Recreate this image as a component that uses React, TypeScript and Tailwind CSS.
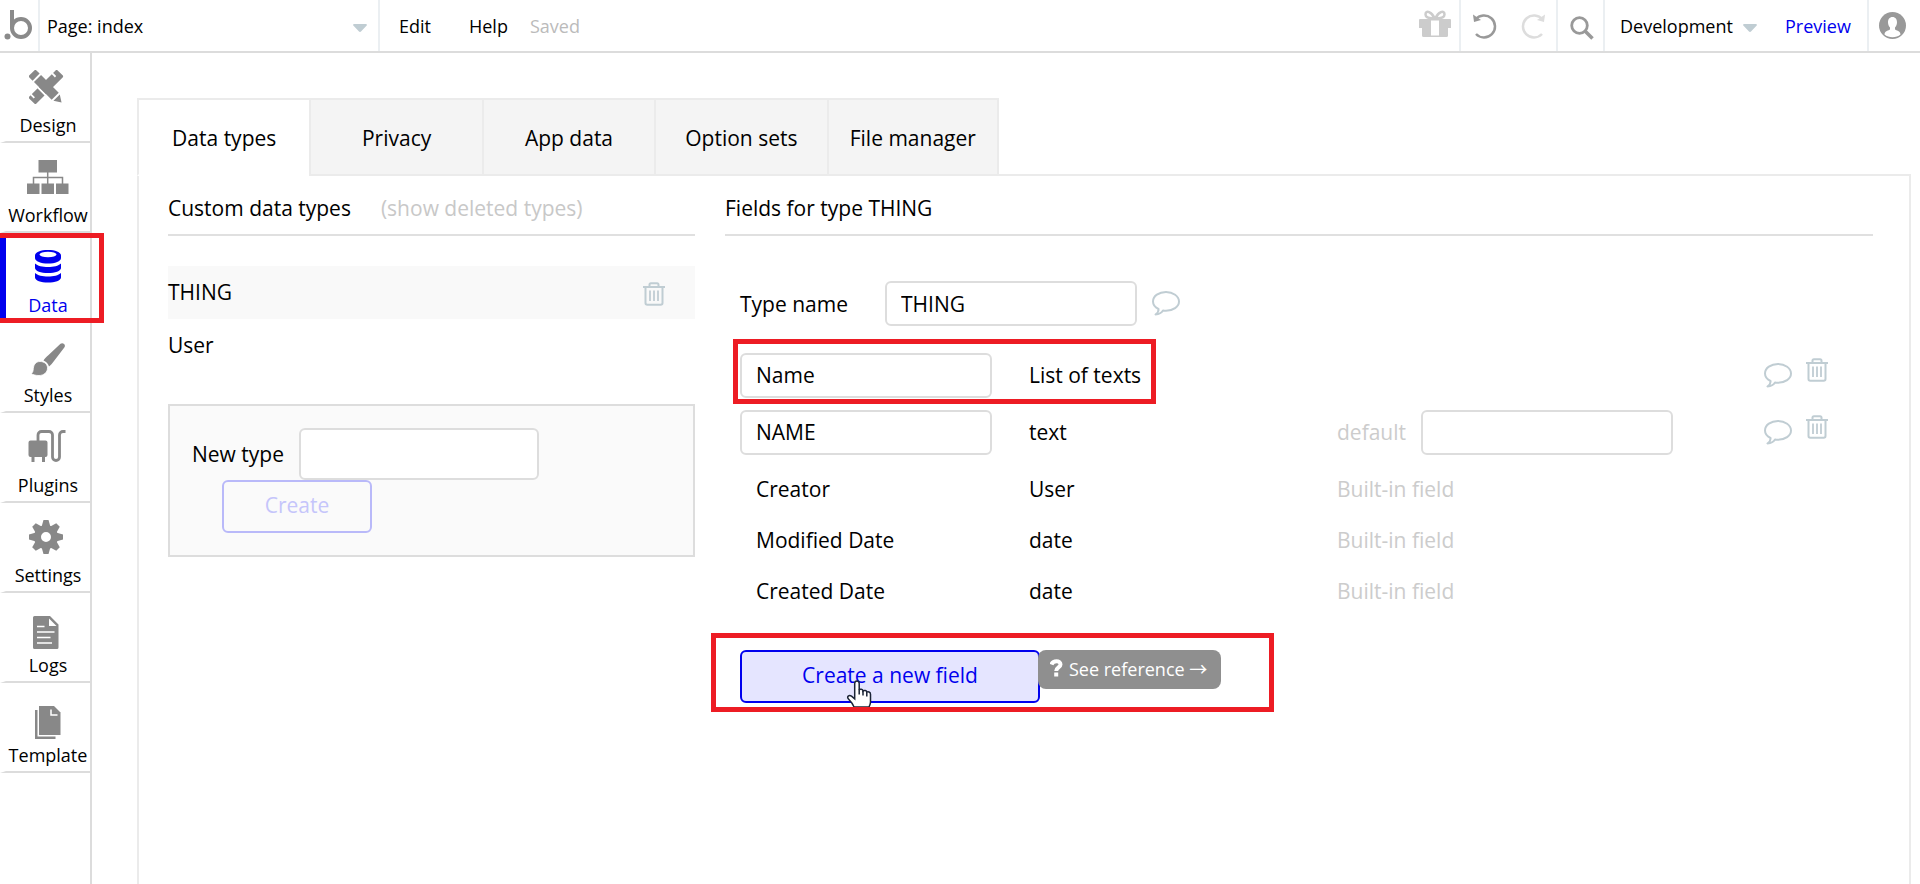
import { useState } from "react";
import type { ReactNode } from "react";
import { clsx } from "clsx";

function LogoIcon() {
  return (
    <svg width="30" height="30" viewBox="0 0 30 30" fill="none" stroke="#8a8a8a" strokeWidth="4">
      <circle cx="3.5" cy="26.5" r="3" fill="#8a8a8a" stroke="none" />
      <path d="M8 0v18.5" />
      <circle cx="17" cy="18" r="9" />
    </svg>
  );
}

function DesignIcon() {
  return (
    <svg width="38" height="34" viewBox="0 0 38 34" fill="currentColor">
      <g transform="rotate(-45 17 17)">
        <rect x="-3" y="12" width="40" height="10" rx="1.5" />
        <path d="M1 11.500v5M31 11.500v5" stroke="#fff" strokeWidth="1.800" />
      </g>
      <g transform="rotate(45 17 17)">
        <path d="M-5 10h13v14H-5zM8 22h16v2H8zM28 10h12v14H28z" fill="#fff" />
        <path d="M-1.500 12H3v10h-4.500a1.500 1.500 0 0 1-1.500-1.500v-7a1.500 1.500 0 0 1 1.500-1.500zM5 12h25v10H5zM32 12.500l7 4.500-7 4.500z" />
      </g>
    </svg>
  );
}

function WorkflowIcon() {
  return (
    <svg width="42" height="34" viewBox="0 0 42 34" fill="currentColor">
      <path d="M11.500 0h18.500v12.500H11.500zM0 23.500h12.500V34H0zM14.500 23.500H27V34H14.500zM29 23.500h12.500V34H29z" />
      <path d="M20.700 12v12M6.500 24v-6.500h29V24" fill="none" stroke="currentColor" strokeWidth="1.500" />
    </svg>
  );
}

function DataIcon() {
  return (
    <svg width="26" height="33" viewBox="0 0 26 33" fill="currentColor">
      <path d="M0 5.500C0 2 6 0 13 0s13 2 13 5.500V8c0 3.500-6 5.500-13 5.500S0 11.500 0 8z" />
      <ellipse cx="13" cy="4.500" rx="8.500" ry="2.800" fill="#fff" />
      <path d="M0 13.500c2.500 2.500 7.500 3.500 13 3.500s10.500-1 13-3.500V18c0 3-6 5-13 5S0 21 0 18z" />
      <path d="M0 23c2.500 2.500 7.500 3.500 13 3.500S23.500 25.500 26 23v4.500c0 3-6 5-13 5s-13-2-13-5z" />
    </svg>
  );
}

function StylesIcon() {
  return (
    <svg width="35" height="36" viewBox="0 -3 35 36" fill="currentColor">
      <path d="M29.500.8c2.200-1.700 5.600.8 4 3.400L23 18c-1.500 2-3 4-5 5.500-.8-2.800-3-5-5.500-6 1.200-2.200 3-3.500 4.500-5z" />
      <path
        d="M9 18.500c4.300 0 7.300 2.500 7.500 6.200.2 4.500-3.500 7.800-8.500 7.800-3 0-5.500-.5-8-2 2-.8 2-2.500 2.300-5 .4-4.300 3-7 6.700-7z"
        stroke="#fff"
        strokeWidth=".8"
      />
    </svg>
  );
}

function PluginsIcon() {
  return (
    <svg width="41" height="33" viewBox="0 0 41 33" fill="currentColor">
      <path d="M2.500 10.500h15a2 2 0 0 1 2 2V25a2 2 0 0 1-2 2H17v5h-3v-5H6.500v5h-3v-5h-1a2 2 0 0 1-2-2V12.500a2 2 0 0 1 2-2z" />
      <path
        d="M10 11V5a3.500 3.500 0 0 1 3.500-3.500H21A3.500 3.500 0 0 1 24.500 5v22a3.500 3.500 0 0 0 7 0V5A3.500 3.500 0 0 1 35 1.500h2.500"
        fill="none"
        stroke="currentColor"
        strokeWidth="2.800"
      />
    </svg>
  );
}

function SettingsIcon() {
  const teeth = [0, 45, 90, 135, 180, 225, 270, 315];
  return (
    <svg width="38" height="34" viewBox="0 0 38 34" fill="currentColor">
      <circle cx="17" cy="17" r="8.500" fill="none" stroke="currentColor" strokeWidth="7" />
      {teeth.map((a) => (
        <path key={a} d="M14.500 0h5l2 7h-9z" transform={`rotate(${a} 17 17)`} />
      ))}
    </svg>
  );
}

function LogsIcon() {
  return (
    <svg width="30" height="39" viewBox="0 -6 30 39" fill="currentColor">
      <path d="M1.500 0H17l8.500 8.500v23a1.500 1.500 0 0 1-1.500 1.500H1.500A1.500 1.500 0 0 1 0 31.500v-30A1.500 1.500 0 0 1 1.500 0z" />
      <path d="M16 2.500v7.500h7.500z" fill="#fff" />
      <path d="M4 10.500h7.500M4 16h17.500M4 21.500h13.500M4 27h15" stroke="#fff" strokeWidth="1.500" />
    </svg>
  );
}

function TemplateIcon() {
  return (
    <svg width="26" height="39" viewBox="0 -6 26 39" fill="currentColor">
      <path d="M4 0h15l6.500 6.500V29H4z" />
      <path d="M16 3.500V9h6.500" fill="none" stroke="#fff" strokeWidth="1.500" />
      <path d="M0 4h2.500v26.500h18V33H0z" />
    </svg>
  );
}

function GiftIcon() {
  return (
    <svg width="32" height="28" viewBox="0 0 32 28" fill="#ccc">
      <path d="M1 9h11v18H4.500A1.500 1.500 0 0 1 3 25.500V18H0v-8a1 1 0 0 1 1-1zM20 9h11a1 1 0 0 1 1 1v8h-3v7.500a1.500 1.500 0 0 1-1.500 1.500H20zM12 9h8v1.500h-8zM12 25.500h8V27h-8z" />
      <path
        d="M15.500 8.500C13 2 6.500-.5 6.500 4.500c0 3 4 4 9 4zM16.500 8.500C19 2 25.500-.5 25.500 4.500c0 3-4 4-9 4z"
        fill="none"
        stroke="#ccc"
        strokeWidth="2.500"
      />
    </svg>
  );
}

function UndoIcon({ className }: { className?: string }) {
  return (
    <svg className={className} width="24" height="26" viewBox="0 0 24 26" fill="none" stroke="currentColor">
      <path d="M2.500 6.500A11 11 0 1 1 3 21" strokeWidth="2.500" />
      <path d="M0 1.500l1 7.500 7-2z" fill="currentColor" stroke="none" />
    </svg>
  );
}

function SearchIcon() {
  return (
    <svg width="24" height="24" viewBox="0 0 24 24" fill="none" stroke="#999" strokeWidth="2.800">
      <circle cx="9.500" cy="9.500" r="7.800" />
      <path d="M15 15l7.500 7.500" strokeWidth="3.500" />
    </svg>
  );
}

function AvatarIcon() {
  return (
    <svg width="27" height="27" viewBox="0 0 27 27">
      <circle cx="13.500" cy="13.500" r="13.500" fill="#999" />
      <path
        d="M13.500 5c3 0 4.500 2.300 4.500 5.200 0 2.300-.8 4-2 5.200v2c1 1 5.500 1.300 5.500 5.100-2 1.800-5 2.800-8 2.800s-6-1-8-2.800c0-3.800 4.500-4.100 5.500-5.100v-2c-1.200-1.200-2-2.900-2-5.200C9 7.300 10.500 5 13.500 5z"
        fill="#fff"
      />
    </svg>
  );
}

function Caret({ className }: { className?: string }) {
  return (
    <svg className={className} width="14" height="8" viewBox="0 0 14 8" fill="#c0cdd3">
      <path d="M1 0h12a1 1 0 0 1 .7 1.600L8 7.500a1.400 1.400 0 0 1-2 0L.3 1.600A1 1 0 0 1 1 0z" />
    </svg>
  );
}

function TrashIcon() {
  return (
    <svg width="22" height="24" viewBox="0 0 22 24" fill="none" stroke="#c0cdd3" strokeWidth="2">
      <path d="M0 5h22M6.500 5V3A1.500 1.500 0 0 1 8 1.200h6A1.500 1.500 0 0 1 15.500 3v2" />
      <path d="M2.500 5v16a1.800 1.800 0 0 0 1.800 1.800h13.400a1.800 1.800 0 0 0 1.800-1.800V5" />
      <path d="M7 8.500V19M11 8.500V19M15 8.500V19" strokeWidth="1.800" />
    </svg>
  );
}

function CommentIcon() {
  return (
    <svg width="28" height="25" viewBox="0 0 28 25" fill="none" stroke="#c0cdd3" strokeWidth="2">
      <path
        d="M14 1C7 1 1 5 1 10.500c0 3 2 5.800 5.500 7.500.3 1.800-1 4-3 5.500 3.500-.3 6-1.500 7.500-4 1 .3 2 .3 3 .3 7 0 13-4 13-9.300S21 1 14 1z"
        strokeLinejoin="round"
      />
    </svg>
  );
}

function HelpIcon() {
  return (
    <svg width="13" height="18" viewBox="0 0 13 18" fill="none" stroke="#fff" strokeWidth="4">
      <path d="M1.500 5.500C3 1 10.500 1 10.500 5.500c0 3-4.300 3-4.300 6.500" />
      <path d="M6.200 13.500v4" />
    </svg>
  );
}

function HandCursor() {
  return (
    <svg className="pointer-events-none absolute top-[30px] left-[106px]" width="26" height="27" viewBox="0 0 26 27">
      <path
        d="M11 1c1.500 0 2.200 1 2.200 2.500V10c.5-1.300 3.700-1 3.800 1 1-1 3.800-.6 3.800 1.200 1-.8 3.700-.4 3.700 2V22c0 2-.7 3.500-1.500 5H8c-1-3-3-5.500-5.500-8-2.200-2.200.5-4.500 3-2.800l3.200 2.600V3.500C8.700 2 9.500 1 11 1z"
        fill="#fff"
        stroke="#1b2436"
        strokeWidth="1.500"
      />
      <path d="M13.200 9.500v5M17 11v4.500M20.800 12.500v4" stroke="#1b2436" strokeWidth="1.500" />
    </svg>
  );
}

const navItems: { name: string; icon: ReactNode }[] = [
  { name: "Design", icon: <DesignIcon /> },
  { name: "Workflow", icon: <WorkflowIcon /> },
  { name: "Data", icon: <DataIcon /> },
  { name: "Styles", icon: <StylesIcon /> },
  { name: "Plugins", icon: <PluginsIcon /> },
  { name: "Settings", icon: <SettingsIcon /> },
  { name: "Logs", icon: <LogsIcon /> },
  { name: "Template", icon: <TemplateIcon /> },
];

const tabs = ["Data types", "Privacy", "App data", "Option sets", "File manager"];

const builtInFields = [
  { name: "Creator", type: "User" },
  { name: "Modified Date", type: "date" },
  { name: "Created Date", type: "date" },
];

const inputClasses = "rounded-md border-2 border-[#ddd] bg-white outline-none";

function TopBar() {
  return (
    <header className="flex h-[53px] items-stretch border-b-2 border-[#dcdcdc] text-[18px]">
      <a href="#" aria-label="Home" className="flex w-10 items-center border-r-2 border-[#ebeff2] pr-1 pb-0.5 pl-1">
        <LogoIcon />
      </a>
      <div className="relative w-[340px] border-r-2 border-[#ebeff2]">
        <select aria-label="Page" className="h-full w-full appearance-none pt-0.5 pl-[7px] outline-none">
          <option>Page: index</option>
        </select>
        <Caret className="pointer-events-none absolute top-6 right-[11px]" />
      </div>
      <button className="ml-[19px] pt-0.5">Edit</button>
      <button className="ml-[38px] pt-0.5">Help</button>
      <span className="ml-[22px] self-center pt-0.5 text-[#bbb]">Saved</span>

      <div className="ml-auto flex items-stretch">
        <button aria-label="Gifts" className="flex w-[42px] items-center border-r-2 border-[#ebeff2] pb-1">
          <GiftIcon />
        </button>
        <div className="flex w-[97px] items-center gap-6 border-r-2 border-[#ebeff2] pl-3">
          <button aria-label="Undo" className="text-[#999]">
            <UndoIcon />
          </button>
          <button aria-label="Redo" className="text-[#ddd]">
            <UndoIcon className="-scale-x-100" />
          </button>
        </div>
        <button aria-label="Search" className="flex w-[47px] items-center border-r-2 border-[#ebeff2] pt-1 pl-3">
          <SearchIcon />
        </button>
        <div className="relative w-[160px]">
          <select aria-label="Version" className="h-full w-full appearance-none pt-0.5 pl-[15px] outline-none">
            <option>Development</option>
          </select>
          <Caret className="pointer-events-none absolute top-6 right-2" />
        </div>
        <a href="#" className="flex w-[104px] items-center border-r-2 border-[#ebeff2] pt-0.5 pl-5 text-[#0000ee]">
          Preview
        </a>
        <button aria-label="Account" className="flex w-[51px] items-center pl-2.5">
          <AvatarIcon />
        </button>
      </div>
    </header>
  );
}

function Sidebar() {
  return (
    <nav className="w-[92px] shrink-0 border-r-2 border-[#dcdcdc] text-[18px]">
      <ul>
        {navItems.map((item) => {
          const active = item.name === "Data";
          return (
            <li key={item.name} className="relative">
              <a
                href="#"
                className={clsx(
                  "flex h-[90px] flex-col items-center border-b-2 border-l-[6px] border-b-[#dcdcdc] pt-[17px]",
                  active ? "border-l-[#0000ee] text-[#0000ee]" : "border-l-transparent",
                )}
              >
                <span className={clsx("flex h-[34px] items-start", !active && "text-[#888]")}>{item.icon}</span>
                <span className="mt-[7px] leading-7">{item.name}</span>
              </a>
              {active && (
                <div className="pointer-events-none absolute inset-y-0 -right-3.5 left-0 z-10 border-5 border-l-0 border-[#ed1c24]" />
              )}
            </li>
          );
        })}
      </ul>
    </nav>
  );
}

function DataTypes() {
  return (
    <section className="w-[527px] shrink-0">
      <div className="flex h-[60px] items-center gap-[30px] border-b-2 border-[#e0e0e0] pt-2">
        <h2>Custom data types</h2>
        <a href="#" className="text-[#c8c8c8]">
          (show deleted types)
        </a>
      </div>
      <ul className="mt-[30px]">
        <li className="flex h-[53px] items-center justify-between bg-[#f9f9f9] pr-[30px]">
          THING
          <button aria-label="Delete THING" className="pt-0.5">
            <TrashIcon />
          </button>
        </li>
        <li className="flex h-[53px] items-center">User</li>
      </ul>
      <form className="mt-8 border-2 border-[#ddd] bg-[#fafafa] pt-[22px] pb-[22px] pl-[22px]">
        <div className="flex items-center">
          <label htmlFor="new-type" className="w-[107px] pt-0.5">
            New type
          </label>
          <input id="new-type" className={clsx(inputClasses, "h-[52px] w-[240px] px-3")} />
        </div>
        <button
          type="button"
          className="ml-[30px] block h-[53px] w-[150px] rounded-md border-2 border-[#b9b9f9] pb-0.5 text-[#c5c5fa]"
        >
          Create
        </button>
      </form>
    </section>
  );
}

function RowActions({ name }: { name: string }) {
  return (
    <td className="align-top">
      <div className="flex gap-3.5">
        <button aria-label={`Comment on ${name}`} className="pt-2.5">
          <CommentIcon />
        </button>
        <button aria-label={`Delete ${name}`} className="self-start pt-[5px]">
          <TrashIcon />
        </button>
      </div>
    </td>
  );
}

function Fields() {
  const [typeName, setTypeName] = useState("THING");

  return (
    <section className="min-w-0 flex-1">
      <div className="flex h-[60px] items-center border-b-2 border-[#e0e0e0] pt-2">
        <h2>Fields for type THING</h2>
      </div>
      <div className="pt-[45px] pl-[15px]">
        <div className="flex items-center">
          <label htmlFor="type-name" className="w-[145px] pt-0.5">
            Type name
          </label>
          <input
            id="type-name"
            value={typeName}
            onChange={(e) => setTypeName(e.target.value)}
            className={clsx(inputClasses, "h-[45px] w-[252px] px-3.5")}
          />
          <button aria-label="Comment on THING" className="ml-[15px]">
            <CommentIcon />
          </button>
        </div>

        <div className="relative mt-[27px]">
          <table className="w-full table-fixed leading-[45px]">
            <colgroup>
              <col className="w-[289px]" />
              <col className="w-[308px]" />
              <col />
              <col className="w-[109px]" />
            </colgroup>
            <tbody>
              <tr className="h-[57px]">
                <td className="align-top">
                  <input
                    aria-label="Field name"
                    defaultValue="Name"
                    className={clsx(inputClasses, "block h-[45px] w-[252px] px-3.5")}
                  />
                </td>
                <td className="align-top">List of texts</td>
                <td />
                <RowActions name="Name" />
              </tr>
              <tr className="h-[57px]">
                <td className="align-top">
                  <input
                    aria-label="Field name"
                    defaultValue="NAME"
                    className={clsx(inputClasses, "block h-[45px] w-[252px] px-3.5")}
                  />
                </td>
                <td className="align-top">text</td>
                <td className="align-top">
                  <div className="flex">
                    <label htmlFor="default-value" className="w-[84px] text-[#ccc]">
                      default
                    </label>
                    <input id="default-value" className={clsx(inputClasses, "h-[45px] w-[252px] px-3.5")} />
                  </div>
                </td>
                <RowActions name="NAME" />
              </tr>
              {builtInFields.map((field) => (
                <tr key={field.name} className="h-[51px]">
                  <td className="pl-4 align-top">{field.name}</td>
                  <td className="align-top">{field.type}</td>
                  <td className="align-top text-[#ccc]">Built-in field</td>
                  <td />
                </tr>
              ))}
            </tbody>
          </table>
          <div className="pointer-events-none absolute -top-3.5 -left-[7px] h-[65px] w-[423px] border-5 border-[#ed1c24]" />
        </div>

        <div className="relative mt-[30px] flex items-start">
          <button className="h-[53px] w-[300px] rounded-md border-2 border-[#0000ee] bg-[#e5e5ff] pb-0.5 text-[#0000ee]">
            Create a new field
          </button>
          <a
            href="#"
            className="z-10 -ml-0.5 flex h-[39px] w-[183px] items-center gap-1.5 rounded-lg bg-[#8f8f8f] pl-3 text-[18px] whitespace-nowrap text-white"
          >
            <span className="pb-1">
              <HelpIcon />
            </span>
            <span className="font-['Open_Sans','Noto_Sans_CJK_JP',sans-serif]">See reference →</span>
          </a>
          <HandCursor />
          <div className="pointer-events-none absolute -top-[17px] -left-[29px] h-[79px] w-[563px] border-5 border-[#ed1c24]" />
        </div>
      </div>
    </section>
  );
}

export default function App() {
  const [tab, setTab] = useState("Data types");

  return (
    <div className="flex min-h-screen flex-col bg-white font-['Open_Sans',sans-serif] text-black">
      <TopBar />
      <div className="flex flex-1">
        <Sidebar />
        <main className="flex min-w-0 flex-1 flex-col pt-[45px] pr-[9px] pl-[45px] text-[21px]">
          <div className="flex h-[78px]">
            <div role="tablist" className="grid w-[862px] grid-cols-5">
              {tabs.map((name) => (
                <button
                  key={name}
                  role="tab"
                  aria-selected={tab === name}
                  onClick={() => setTab(name)}
                  className={clsx(
                    "border-y-2 border-l-2 border-[#ebebeb] pt-[3px] last:border-r-2",
                    tab === name ? "border-b-white bg-white" : "bg-[#f4f4f4]",
                  )}
                >
                  {name}
                </button>
              ))}
            </div>
            <div className="flex-1 border-b-2 border-[#ebebeb]" />
          </div>
          <div className="flex flex-1 gap-[30px] border-x-2 border-[#ebebeb] pr-9 pl-[29px]">
            <DataTypes />
            <Fields />
          </div>
        </main>
      </div>
    </div>
  );
}
